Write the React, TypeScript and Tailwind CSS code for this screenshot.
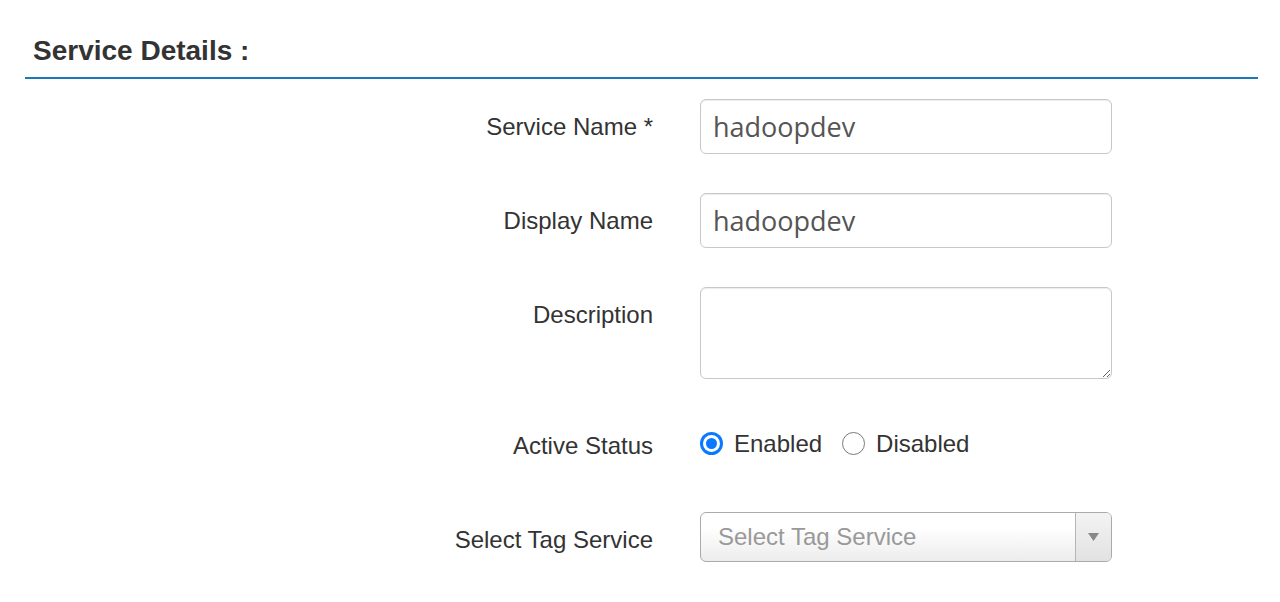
import React from "react";

const labelCls =
  "w-[628px] shrink-0 text-right pt-[14px] text-[24px] leading-[27px] text-[#333]";

const inputCls =
  "h-[55px] w-[412px] rounded-[6px] border border-[#c8c8c8] px-[12px] text-[27px] text-[#555] shadow-[inset_0_1px_1px_rgba(0,0,0,0.075)] outline-none";

function Radio({ checked, label }: { checked: boolean; label: string }) {
  return (
    <label className="flex items-center">
      {checked ? (
        <span className="flex h-[23px] w-[23px] items-center justify-center rounded-full bg-[#0a79ff]">
          <span className="flex h-[17px] w-[17px] items-center justify-center rounded-full bg-white">
            <span className="h-[11px] w-[11px] rounded-full bg-[#0a79ff]" />
          </span>
        </span>
      ) : (
        <span className="h-[23px] w-[23px] rounded-full border border-[#7a7a7a] bg-white" />
      )}
      <span className="ml-[11px] text-[24px] leading-[27px] text-[#333]">{label}</span>
    </label>
  );
}

export default function App() {
  return (
    <div
      className="min-h-[602px] w-[1280px] bg-white px-[25px]"
      style={{ fontFamily: '"Liberation Sans", Arial, sans-serif' }}
    >
      <div className="w-[1233px] border-b-2 border-[#1a7ab8] pt-[36px] pb-[11px]">
        <h2 className="pl-[8px] text-[28px] font-bold leading-[30px] text-[#333]">
          Service Details :
        </h2>
      </div>

      <div className="flex flex-col gap-[39px] pt-[20px]">
        <div className="flex gap-[47px]">
          <div className={labelCls}>Service Name *</div>
          <input
            readOnly
            value="hadoopdev"
            className={inputCls}
            style={{ fontFamily: '"Open Sans", sans-serif' }}
          />
        </div>
        <div className="flex gap-[47px]">
          <div className={labelCls}>Display Name</div>
          <input
            readOnly
            value="hadoopdev"
            className={inputCls}
            style={{ fontFamily: '"Open Sans", sans-serif' }}
          />
        </div>
        <div className="flex gap-[47px]">
          <div className={labelCls}>Description</div>
          <textarea
            readOnly
            className="block h-[92px] w-[412px] resize rounded-[6px] border border-[#c8c8c8] px-[12px] text-[27px] text-[#555] shadow-[inset_0_1px_1px_rgba(0,0,0,0.075)] outline-none"
          />
        </div>
        <div className="flex h-[55px] gap-[47px]">
          <div className={labelCls}>Active Status</div>
          <div className="flex items-start gap-[20px] pt-[12px]">
            <Radio checked label="Enabled" />
            <Radio checked={false} label="Disabled" />
          </div>
        </div>
        <div className="flex gap-[47px]">
          <div className={labelCls}>Select Tag Service</div>
          <div className="flex h-[50px] w-[412px] overflow-hidden rounded-[6px] border border-[#aaa] bg-[linear-gradient(to_bottom,#ffffff_30%,#f3f3f3_75%,#ececec_100%)]">
            <div className="flex flex-1 items-center pl-[17px] text-[24px] text-[#999]">
              Select Tag Service
            </div>
            <div className="flex w-[36px] items-center justify-center border-l border-[#b5b5b5] bg-[linear-gradient(to_bottom,#f3f3f3,#e2e2e2)]">
              <svg width="11" height="8" viewBox="0 0 11 8">
                <path d="M0 0 L11 0 L5.5 8 Z" fill="#888" />
              </svg>
            </div>
          </div>
        </div>
      </div>
    </div>
  );
}
